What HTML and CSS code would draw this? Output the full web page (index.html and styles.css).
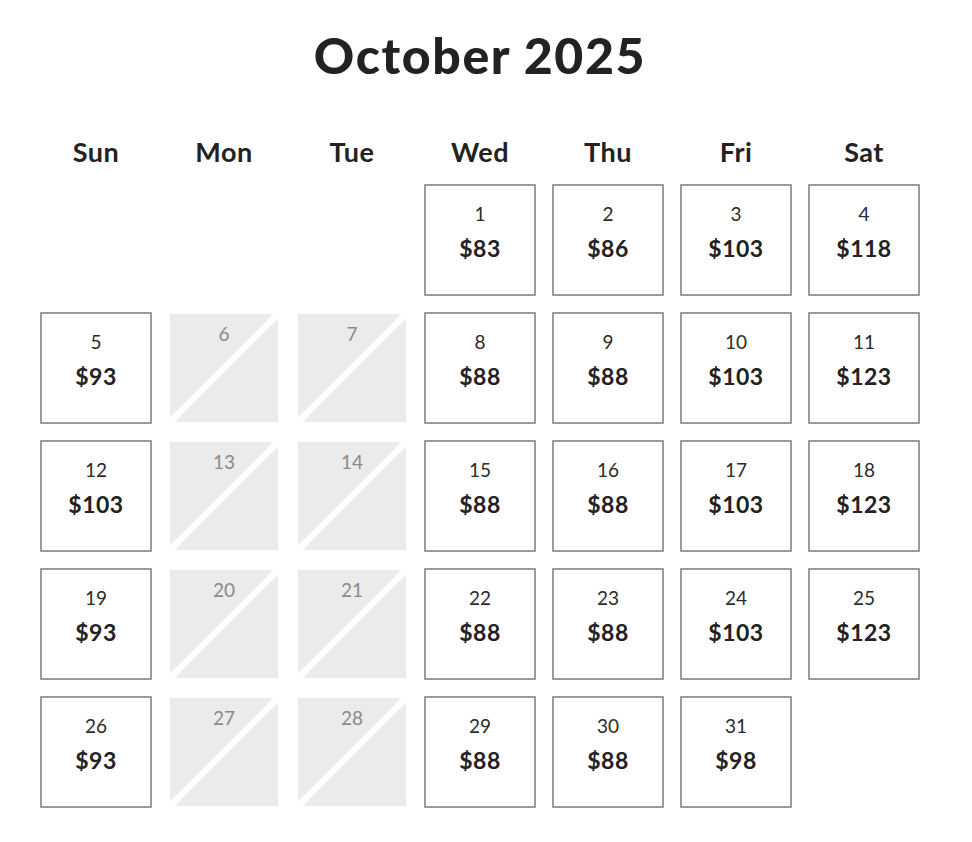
FILE: index.html
```html
<!DOCTYPE html>
<html>
<head>
<meta charset="utf-8">
<link rel="stylesheet" href="styles.css">
</head>
<body>
<div class="cal">
  <h1 class="title">October 2025</h1>
  <div class="grid">
    <div class="dow">Sun</div><div class="dow">Mon</div><div class="dow">Tue</div><div class="dow">Wed</div><div class="dow">Thu</div><div class="dow">Fri</div><div class="dow">Sat</div>

    <div class="empty"></div><div class="empty"></div><div class="empty"></div>
    <div class="day"><span class="num">1</span><span class="price">$83</span></div>
    <div class="day"><span class="num">2</span><span class="price">$86</span></div>
    <div class="day"><span class="num">3</span><span class="price">$103</span></div>
    <div class="day"><span class="num">4</span><span class="price">$118</span></div>

    <div class="day"><span class="num">5</span><span class="price">$93</span></div>
    <div class="day off"><span class="num">6</span></div>
    <div class="day off"><span class="num">7</span></div>
    <div class="day"><span class="num">8</span><span class="price">$88</span></div>
    <div class="day"><span class="num">9</span><span class="price">$88</span></div>
    <div class="day"><span class="num">10</span><span class="price">$103</span></div>
    <div class="day"><span class="num">11</span><span class="price">$123</span></div>

    <div class="day"><span class="num">12</span><span class="price">$103</span></div>
    <div class="day off"><span class="num">13</span></div>
    <div class="day off"><span class="num">14</span></div>
    <div class="day"><span class="num">15</span><span class="price">$88</span></div>
    <div class="day"><span class="num">16</span><span class="price">$88</span></div>
    <div class="day"><span class="num">17</span><span class="price">$103</span></div>
    <div class="day"><span class="num">18</span><span class="price">$123</span></div>

    <div class="day"><span class="num">19</span><span class="price">$93</span></div>
    <div class="day off"><span class="num">20</span></div>
    <div class="day off"><span class="num">21</span></div>
    <div class="day"><span class="num">22</span><span class="price">$88</span></div>
    <div class="day"><span class="num">23</span><span class="price">$88</span></div>
    <div class="day"><span class="num">24</span><span class="price">$103</span></div>
    <div class="day"><span class="num">25</span><span class="price">$123</span></div>

    <div class="day"><span class="num">26</span><span class="price">$93</span></div>
    <div class="day off"><span class="num">27</span></div>
    <div class="day off"><span class="num">28</span></div>
    <div class="day"><span class="num">29</span><span class="price">$88</span></div>
    <div class="day"><span class="num">30</span><span class="price">$88</span></div>
    <div class="day"><span class="num">31</span><span class="price">$98</span></div>
  </div>
</div>
</body>
</html>
```

FILE: styles.css
```css
html, body {
  margin: 0;
  padding: 0;
  background: #fff;
}
body {
  font-family: Lato, "Open Sans", "DejaVu Sans", sans-serif;
  color: #222;
}
.cal {
  width: 880px;
  margin-left: 40px;
  padding-top: 26px;
}
.title {
  margin: 0;
  text-align: center;
  font-size: 50px;
  line-height: 58px;
  font-weight: 900;
  letter-spacing: 1.6px;
  color: #222;
}
.grid {
  margin-top: 52px;
  display: grid;
  grid-template-columns: repeat(7, 112px);
  grid-auto-rows: 112px;
  column-gap: 16px;
  row-gap: 16px;
  grid-template-rows: 32px;
}
.dow {
  text-align: center;
  font-size: 27px;
  font-weight: 700;
  line-height: 32px;
  letter-spacing: 0.5px;
  color: #222;
  margin-bottom: -16px;
  align-self: start;
}
.grid > .dow { height: 32px; }
.day {
  box-sizing: border-box;
  border: 2px solid #9b9b9b;
  display: flex;
  flex-direction: column;
  align-items: center;
  padding-top: 16px;
}
.num {
  font-size: 19px;
  font-weight: 400;
  line-height: 24px;
  color: #2a2a2a;
}
.price {
  margin-top: 8px;
  font-size: 23px;
  font-weight: 700;
  line-height: 28px;
  letter-spacing: 0.5px;
  color: #222;
}
.day.off {
  border-color: transparent;
  background-clip: padding-box;
  background-color: #ebebeb;
  background-image: linear-gradient(to bottom right, transparent calc(50% - 3px), #fff calc(50% - 3px), #fff calc(50% + 3px), transparent calc(50% + 3px));
  padding-top: 8px;
}
.day.off .num {
  color: #8a8a8a;
}
```
